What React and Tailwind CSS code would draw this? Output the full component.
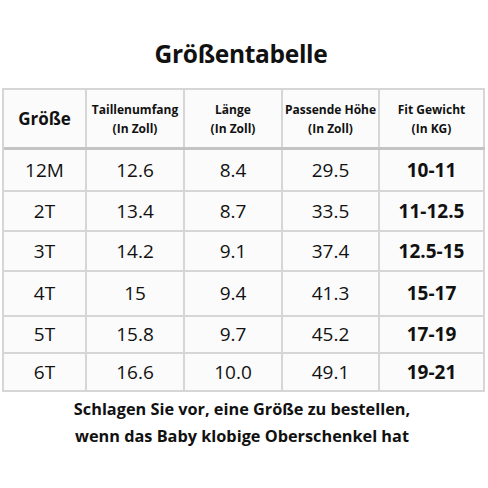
import React from "react";

const rows = [
  ["12M", "12.6", "8.4", "29.5", "10-11", "h-[42px]"],
  ["2T", "13.4", "8.7", "33.5", "11-12.5", "h-[40px]"],
  ["3T", "14.2", "9.1", "37.4", "12.5-15", "h-[40px]"],
  ["4T", "15", "9.4", "41.3", "15-17", "h-[45px]"],
  ["5T", "15.8", "9.7", "45.2", "17-19", "h-[37px]"],
  ["6T", "16.6", "10.0", "49.1", "19-21", "h-[38px]"],
];

const cell = "flex items-center justify-center border-r-2 border-b-2 border-[#d6d6d6] bg-[#fbfbfb]";

export default function App() {
  return (
    <div
      className="w-[488px] h-[488px] bg-white text-[#111] overflow-hidden"
      style={{ fontFamily: "'Open Sans', 'Noto Sans', sans-serif" }}
    >
      <div className="pt-[37px] pr-[6px] h-[88px] text-center text-[24.5px] leading-[34px] font-bold tracking-[-0.3px]">
        Größentabelle
      </div>
      <div className="ml-[2px] w-[483px] border-l-2 border-t-2 border-[#d6d6d6]">
        <div className="grid grid-cols-[83px_98px_98px_97px_105px] h-[60px] border-b-[3px] border-[#c4c4c4]">
          <div className="flex items-center justify-center border-r-2 border-[#d6d6d6] bg-[#fbfbfb] text-[17px] font-bold">Größe</div>
          {[
            ["Taillenumfang", "(In Zoll)"],
            ["Länge", "(In Zoll)"],
            ["Passende Höhe", "(In Zoll)"],
            ["Fit Gewicht", "(In KG)"],
          ].map(([a, b]) => (
            <div key={a} className="flex flex-col items-center justify-center border-r-2 border-[#d6d6d6] bg-[#fbfbfb] text-[12px] leading-[19px] font-bold">
              <span>{a}</span>
              <span>{b}</span>
            </div>
          ))}
        </div>
        {rows.map(([s, w, l, h, f, ht]) => (
          <div key={s} className={`grid grid-cols-[83px_98px_98px_97px_105px] ${ht} text-[19px] font-medium`}>
            <div className={cell}>{s}</div>
            <div className={cell}>{w}</div>
            <div className={cell}>{l}</div>
            <div className={cell}>{h}</div>
            <div className={`${cell} font-bold`}>{f}</div>
          </div>
        ))}
      </div>
      <div className="mt-[4px] pr-[4px] text-center text-[16.3px] leading-[27px] font-bold">
        <div>Schlagen Sie vor, eine Größe zu bestellen,</div>
        <div>wenn das Baby klobige Oberschenkel hat</div>
      </div>
    </div>
  );
}
